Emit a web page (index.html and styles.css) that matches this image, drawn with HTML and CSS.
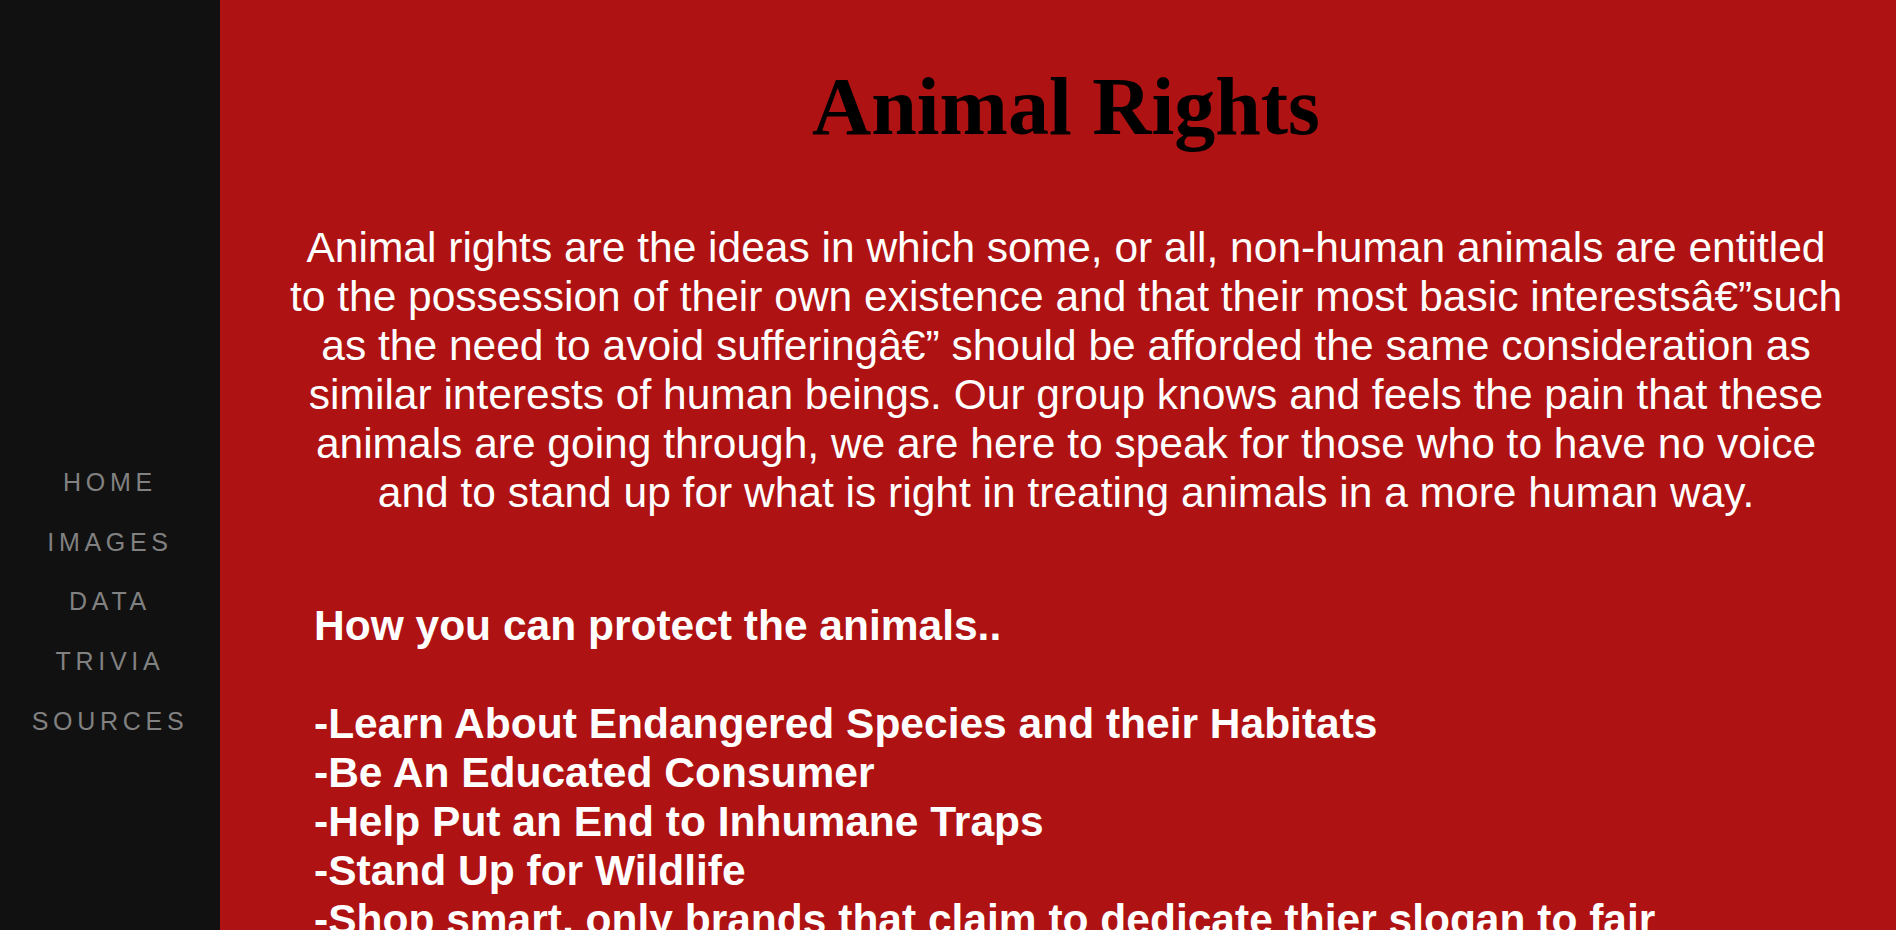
FILE: index.html
```html
<!DOCTYPE html>
<html lang="en">
<head>
<meta charset="utf-8">
<title>Animal Rights</title>
<link rel="stylesheet" href="styles.css">
</head>
<body>
<nav class="sidenav">
  <a href="#" class="nav-link">HOME</a>
  <a href="#" class="nav-link">IMAGES</a>
  <a href="#" class="nav-link">DATA</a>
  <a href="#" class="nav-link">TRIVIA</a>
  <a href="#" class="nav-link">SOURCES</a>
</nav>
<main class="main">
  <h1 class="title">Animal Rights</h1>
  <p class="intro">Animal rights are the ideas in which some, or all, non-human animals are entitled to the possession of their own existence and that their most basic interestsâ€”such as the need to avoid sufferingâ€” should be afforded the same consideration as similar interests of human beings. Our group knows and feels the pain that these animals are going through, we are here to speak for those who to have no voice and to stand up for what is right in treating animals in a more human way.</p>
  <div class="tips">
    How you can protect the animals..<br><br>
    -Learn About Endangered Species and their Habitats<br>
    -Be An Educated Consumer<br>
    -Help Put an End to Inhumane Traps<br>
    -Stand Up for Wildlife<br>
    -Shop smart, only brands that claim to dedicate thier slogan to fair treatment of animals
  </div>
</main>
</body>
</html>
```

FILE: styles.css
```css
html, body {
  margin: 0;
  padding: 0;
}

body {
  display: flex;
  min-height: 100vh;
  background: #af1212;
  font-family: "Liberation Sans", Arial, sans-serif;
  overflow: hidden;
}

.sidenav {
  flex: 0 0 220px;
  width: 220px;
  min-height: 930px;
  background: #111111;
  display: flex;
  flex-direction: column;
  padding-top: 453px;
  box-sizing: border-box;
}

.nav-link {
  display: block;
  text-align: center;
  color: #818181;
  text-decoration: none;
  font-size: 25px;
  line-height: 59.7px;
  letter-spacing: 4.7px;
}

.main {
  flex: 1;
  padding: 0 47px 0 63px;
  background: #af1212;
}

.title {
  margin: 60px 0 0;
  text-align: center;
  font-family: "Liberation Serif", "Times New Roman", serif;
  font-weight: bold;
  font-size: 82px;
  line-height: 94px;
  color: #000;
}

.intro {
  margin: 69px 0 0;
  text-align: center;
  color: #fff;
  font-size: 42.5px;
  line-height: 49px;
}

.tips {
  margin-top: 84px;
  padding-left: 31px;
  color: #fff;
  font-weight: bold;
  font-size: 42.5px;
  line-height: 49px;
}
```
